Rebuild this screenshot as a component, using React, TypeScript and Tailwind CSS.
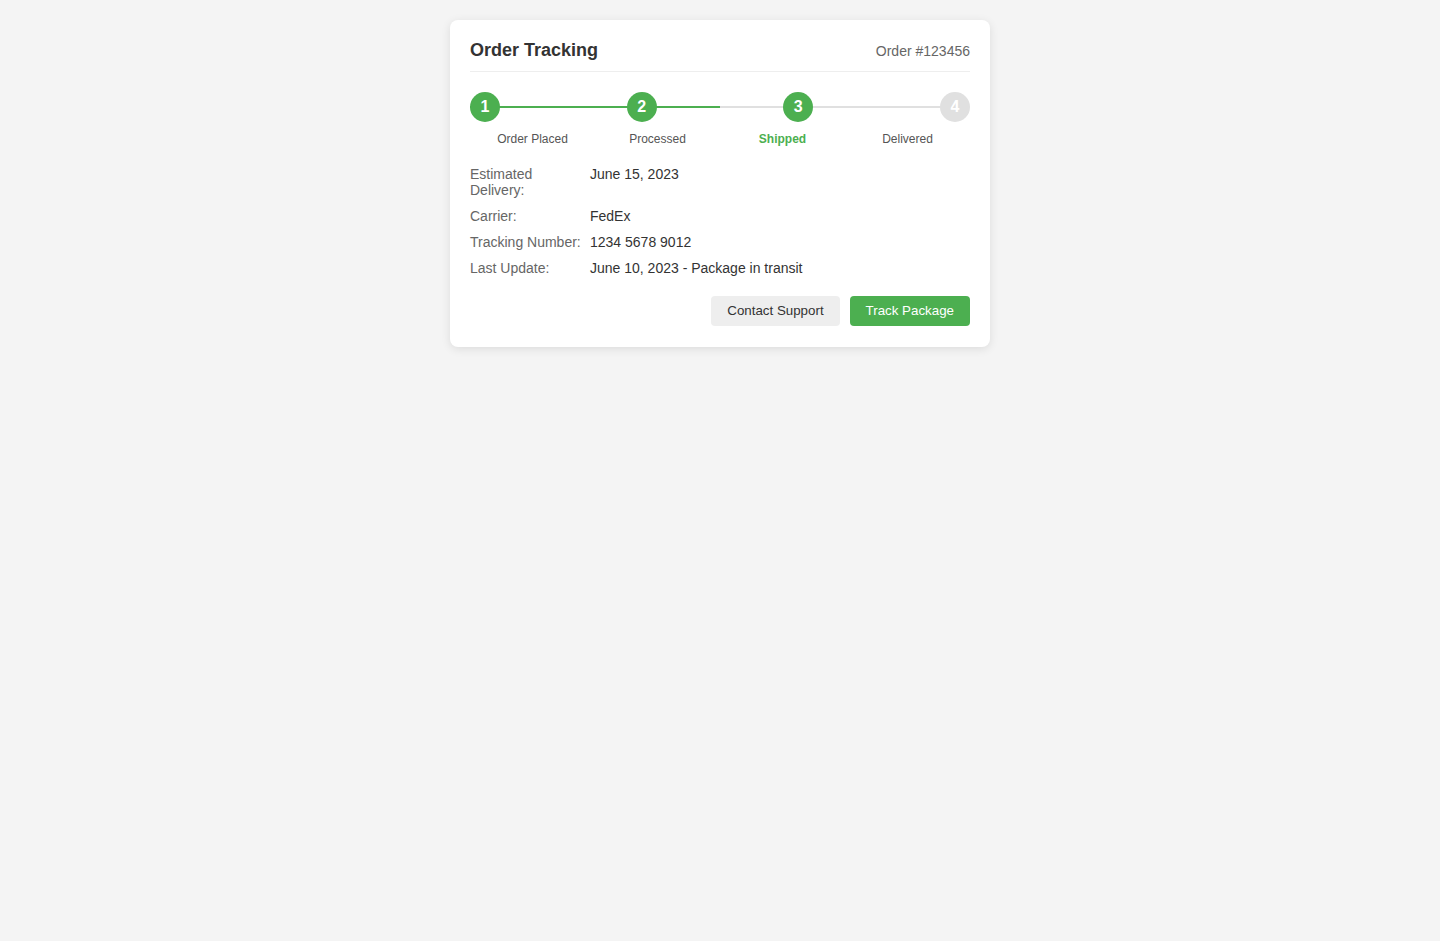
import React from 'react';

const steps = [
  { n: 1, label: 'Order Placed', state: 'done' },
  { n: 2, label: 'Processed', state: 'done' },
  { n: 3, label: 'Shipped', state: 'active' },
  { n: 4, label: 'Delivered', state: 'todo' },
];

const details = [
  { label: 'Estimated Delivery:', value: 'June 15, 2023' },
  { label: 'Carrier:', value: 'FedEx' },
  { label: 'Tracking Number:', value: '1234 5678 9012' },
  { label: 'Last Update:', value: 'June 10, 2023 - Package in transit' },
];

const App: React.FC = () => {
  return (
    <div className="min-h-[941px] bg-[#f4f4f4] pt-5 font-['Liberation_Sans',Arial,sans-serif]">
      <div className="mx-auto w-[540px] rounded-lg bg-white p-5 pb-[21px] shadow-[0_2px_10px_rgba(0,0,0,0.1)]">
        <div className="mb-5 flex items-center justify-between border-b border-[#eee] pb-2.5">
          <h1 className="text-lg leading-[21px] font-bold text-[#333]">Order Tracking</h1>
          <span className="text-sm text-[#666]">Order #123456</span>
        </div>

        <div className="relative flex justify-between">
          <div className="absolute top-[14px] right-[15px] left-[15px] h-0.5 bg-[#e0e0e0]" />
          <div className="absolute top-[14px] left-0 h-0.5 w-1/2 bg-[#4caf50]" />
          {steps.map((s) => (
            <div
              key={s.n}
              className={
                'relative z-10 flex h-[30px] w-[30px] items-center justify-center rounded-full text-base font-bold text-white ' +
                (s.state === 'todo' ? 'bg-[#e0e0e0]' : 'bg-[#4caf50]')
              }
            >
              {s.n}
            </div>
          ))}
        </div>
        <div className="mt-2.5 grid grid-cols-4">
          {steps.map((s) => (
            <div
              key={s.n}
              className={
                'text-center text-xs leading-[14px] ' +
                (s.state === 'active' ? 'font-bold text-[#4caf50]' : 'text-[#555]')
              }
            >
              {s.label}
            </div>
          ))}
        </div>

        <div className="mt-5 flex flex-col gap-2.5 text-sm leading-4">
          {details.map((d) => (
            <div key={d.label} className="flex">
              <div className="w-[120px] shrink-0 text-[#666]">{d.label}</div>
              <div className="text-[#333]">{d.value}</div>
            </div>
          ))}
        </div>

        <div className="mt-5 flex justify-end gap-2.5">
          <button className="h-[30px] rounded bg-[#eee] px-4 text-[13.33px] text-[#333]">Contact Support</button>
          <button className="h-[30px] rounded bg-[#4caf50] px-4 text-[13.33px] text-white">Track Package</button>
        </div>
      </div>
    </div>
  );
};

export default App;
